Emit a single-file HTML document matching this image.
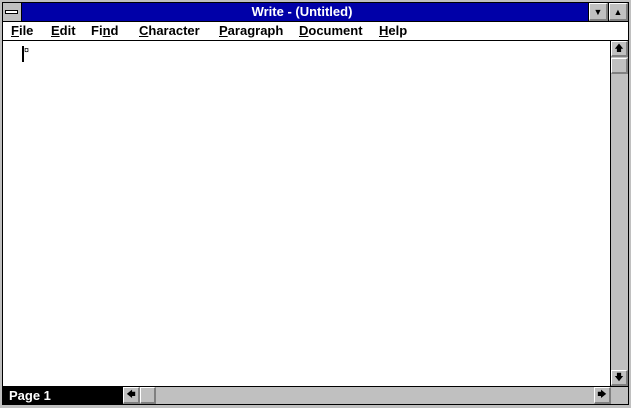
<!DOCTYPE html><html><head><style>
*{margin:0;padding:0;box-sizing:border-box}
body{width:631px;height:408px;background:#c0c0c0;position:relative;overflow:hidden;font-family:"Liberation Sans",sans-serif}
.a{position:absolute}
.btn{position:absolute;background:#c0c0c0;border-top:1px solid #fff;border-left:1px solid #fff;border-right:2px solid #808080;border-bottom:2px solid #808080;display:flex;align-items:center;justify-content:center;font-size:9px;color:#000}
u{text-decoration:underline}
</style></head><body>
<div class="a" style="left:2px;top:2px;width:627px;height:403px;border:1px solid #000;background:#000"></div>
<div class="a" style="left:3px;top:3px;width:18px;height:18px;background:#c0c0c0"></div>
<div class="a" style="left:5px;top:10px;width:13px;height:4px;border:1px solid #000;background:#fff"></div>
<div class="a" style="left:22px;top:3px;width:566px;height:18px;background:#0000a8;color:#fff;font-weight:bold;font-size:13px;text-align:center;line-height:18px;padding-right:6px">Write - (Untitled)</div>
<div class="btn" style="left:589px;top:3px;width:19px;height:18px">▼</div>
<div class="btn" style="left:609px;top:3px;width:19px;height:18px">▲</div>
<div class="a" style="left:3px;top:22px;width:625px;height:18px;background:#fff;font-size:13px;font-weight:bold;line-height:18px;color:#000">
<span class="a" style="left:8px"><u>F</u>ile</span>
<span class="a" style="left:48px"><u>E</u>dit</span>
<span class="a" style="left:88px">Fi<u>n</u>d</span>
<span class="a" style="left:136px"><u>C</u>haracter</span>
<span class="a" style="left:216px"><u>P</u>aragraph</span>
<span class="a" style="left:296px"><u>D</u>ocument</span>
<span class="a" style="left:376px"><u>H</u>elp</span>
</div>
<div class="a" style="left:3px;top:41px;width:607px;height:345px;background:#fff"></div>
<div class="a" style="left:22px;top:46px;width:2px;height:16px;background:#000"></div>
<div class="a" style="left:24px;top:45px;font-size:9px;line-height:10px">¤</div>
<div class="a" style="left:611px;top:41px;width:17px;height:345px;background:#c0c0c0"></div>
<div class="btn" style="left:611px;top:41px;width:17px;height:16px">🡅</div>
<div class="btn" style="left:611px;top:58px;width:17px;height:16px"></div>
<div class="btn" style="left:611px;top:370px;width:17px;height:16px">🡇</div>
<div class="a" style="left:3px;top:387px;width:119px;height:17px;background:#000;color:#fff;font-weight:bold;font-size:13px;line-height:17px;padding-left:6px">Page 1</div>
<div class="a" style="left:123px;top:387px;width:505px;height:17px;background:#c0c0c0"></div>
<div class="btn" style="left:123px;top:387px;width:17px;height:17px">🡄</div>
<div class="btn" style="left:140px;top:387px;width:16px;height:17px"></div>
<div class="btn" style="left:594px;top:387px;width:17px;height:17px">🡆</div>
<div class="a" style="left:611px;top:387px;width:17px;height:17px;background:#c0c0c0"></div>
</body></html>
